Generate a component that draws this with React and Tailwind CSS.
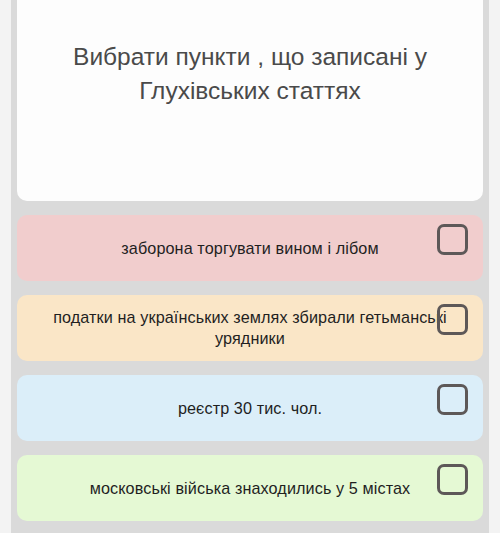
import React, { useState } from 'react';

const options = [
  { id: 1, text: 'заборона торгувати вином і лібом', bg: 'bg-[#f1cdcd]' },
  { id: 2, text: 'податки на українських землях збирали гетьманські урядники', bg: 'bg-[#fae6c7]' },
  { id: 3, text: 'реєстр 30 тис. чол.', bg: 'bg-[#dbeef9]' },
  { id: 4, text: 'московські війська знаходились у 5 містах', bg: 'bg-[#e5f9d4]' },
];

const App = () => {
  const [checked, setChecked] = useState({});

  const toggle = (id) => {
    setChecked(prev => ({ ...prev, [id]: !prev[id] }));
  };

  return (
    <div className="min-h-[533px] bg-[#f3f3f3] px-[11px]" style={{ fontFamily: '"Liberation Sans", Arial, sans-serif' }}>
      <div className="min-h-[533px] bg-[#dadada] px-[6px] pb-[12px]">
        {/* Question */}
        <div className="h-[201px] rounded-b-[10px] bg-[#fdfdfd] flex items-center justify-center px-[30px] pb-[54px]">
          <h1 className="text-center text-[24.5px] leading-[34px] text-[#4a4a4a]">
            Вибрати пункти , що записані у Глухівських статтях
          </h1>
        </div>

        {/* Options */}
        <div className="mt-[14px] flex flex-col gap-[14px]">
          {options.map(opt => (
            <div
              key={opt.id}
              onClick={() => toggle(opt.id)}
              className={`relative h-[66px] rounded-[10px] ${opt.bg} flex items-center justify-center px-[26px] cursor-pointer`}
            >
              <p className="text-center text-[16.2px] leading-[21px] tracking-[0.1px] text-[#1f1f1f]">{opt.text}</p>
              <div className="absolute right-[15px] top-[9px] w-[31px] h-[31px] rounded-[7px] border-[3px] border-[#5d5858] flex items-center justify-center">
                {checked[opt.id] && <span className="text-[#5d5858] text-[18px]">✓</span>}
              </div>
            </div>
          ))}
        </div>
      </div>
    </div>
  );
};

export default App;
